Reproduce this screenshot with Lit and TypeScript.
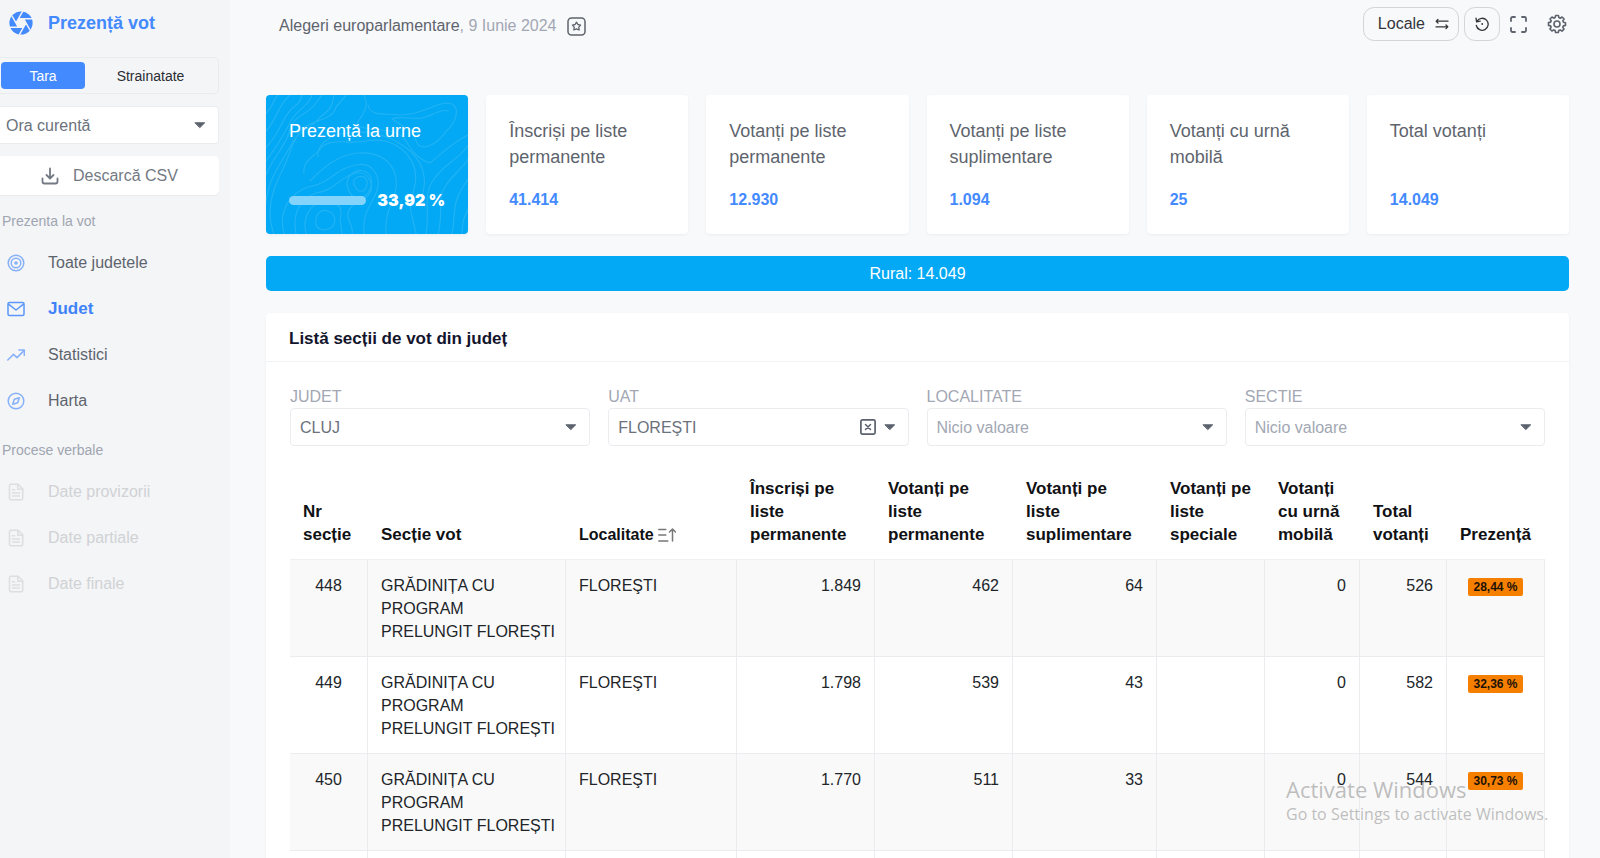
import { LitElement, html, svg, css, nothing, TemplateResult } from "lit";
import { customElement, property } from "lit/decorators.js";

const icons: Record<string, TemplateResult> = {
  target: svg`<circle cx="9" cy="9" r="7.8"/><circle cx="9" cy="9" r="4.8"/><circle cx="9" cy="9" r="1.8" fill="currentColor" stroke="none"/>`,
  mail: svg`<rect x="1" y="2.5" width="16" height="13" rx="1.5"/><path d="M1.5 4.2 9 10l7.500-5.800"/>`,
  trend: svg`<path d="M.8 14 6.500 8.400l3.500 3.200L17 4.600"/><path d="M12 4h5.300v5.300"/>`,
  compass: svg`<circle cx="9" cy="9" r="7.800"/><path d="M12.300 5.700 10.700 10.700 5.700 12.300 7.300 7.300z"/>`,
  file: svg`<path d="M4 1.200h7l4.700 4.600v9.500a1.500 1.500 0 0 1-1.500 1.500H4a1.500 1.500 0 0 1-1.500-1.500V2.700A1.500 1.500 0 0 1 4 1.200z"/><path d="M10.800 1.500v4.700h4.700M5.500 6.800h2M5.500 10h7M5.500 13h7"/>`,
};

interface NavItem {
  icon: string;
  label: string;
  active?: boolean;
}

const voteLinks: NavItem[] = [
  { icon: "target", label: "Toate judetele" },
  { icon: "mail", label: "Judet", active: true },
  { icon: "trend", label: "Statistici" },
  { icon: "compass", label: "Harta" },
];
const recordLinks: NavItem[] = [
  { icon: "file", label: "Date provizorii" },
  { icon: "file", label: "Date partiale" },
  { icon: "file", label: "Date finale" },
];

const stats = [
  ["Înscriși pe liste permanente", "41.414"],
  ["Votanți pe liste permanente", "12.930"],
  ["Votanți pe liste suplimentare", "1.094"],
  ["Votanți cu urnă mobilă", "25"],
  ["Total votanți", "14.049"],
];

const filters = [
  { id: "judet", label: "JUDET", value: "CLUJ" },
  { id: "uat", label: "UAT", value: "FLOREŞTI", clearable: true },
  { id: "localitate", label: "LOCALITATE", value: "" },
  { id: "sectie", label: "SECTIE", value: "" },
];

const school = "GRĂDINIȚA CU\nPROGRAM\nPRELUNGIT FLOREȘTI";
const rows = [
  ["448", school, "FLOREŞTI", "1.849", "462", "64", "", "0", "526", "28,44 %"],
  ["449", school, "FLOREŞTI", "1.798", "539", "43", "", "0", "582", "32,36 %"],
  ["450", school, "FLOREŞTI", "1.770", "511", "33", "", "0", "544", "30,73 %"],
  ["", "", "", "", "", "", "", "", "", ""],
];

const base = css`
  *,
  *::before,
  *::after {
    box-sizing: border-box;
  }
  button,
  select {
    font: inherit;
    color: inherit;
    margin: 0;
    cursor: pointer;
  }
  button {
    border: 0;
    background: none;
    padding: 0;
  }
  svg {
    display: block;
    flex: none;
    fill: none;
    stroke: currentColor;
    stroke-linecap: round;
    stroke-linejoin: round;
  }
`;

@customElement("pv-select")
export class PvSelect extends LitElement {
  @property() label = "";
  @property() value = "";
  @property({ type: Boolean }) clearable = false;
  @property({ type: Boolean, attribute: "hide-label" }) hideLabel = false;

  static styles = [
    base,
    css`
      :host {
        display: block;
        min-width: 0;
      }
      .label {
        display: block;
        line-height: 22px;
        color: #a2a7b3;
      }
      .box {
        display: grid;
        align-items: center;
        height: 38px;
      }
      .field {
        grid-area: 1 / 1;
        width: 100%;
        height: 100%;
        padding: 0 32px 0 9px;
        appearance: none;
        border: 1px solid #eaecf0;
        border-radius: 4px;
        background: #fff;
        color: #6b727c;
        outline-offset: -2px;
      }
      .field.empty {
        color: #a2a7b3;
      }
      .side {
        border-left: 0;
        border-radius: 0 4px 4px 0;
        padding-left: 6px;
      }
      .marks {
        grid-area: 1 / 1;
        justify-self: end;
        display: flex;
        align-items: center;
        gap: 8px;
        padding-right: 13px;
        pointer-events: none;
        color: #5b626d;
      }
      .clear {
        pointer-events: auto;
      }
    `,
  ];

  render() {
    return html`
      ${this.hideLabel ? nothing : html`<label class="label" for="field">${this.label}</label>`}
      <div class="box">
        <select
          id="field"
          aria-label=${this.label}
          class="field ${this.value ? "" : "empty"} ${this.hideLabel ? "side" : ""}"
        >
          <option>${this.value || "Nicio valoare"}</option>
        </select>
        <span class="marks">
          ${this.clearable
            ? html`<button class="clear" aria-label="Șterge">
                <svg width="16" height="16" viewBox="0 0 16 16" stroke-width="1.700">
                  <rect x=".9" y=".9" width="14.200" height="14.200" rx="1.500" />
                  <path d="m5.500 5.500 5 5M10.500 5.500l-5 5" stroke-width="1.500" />
                </svg>
              </button>`
            : nothing}
          <svg width="12" height="8" viewBox="0 0 12 8">
            <path d="M1.300 1.800h9.400L6 6.400z" fill="currentColor" />
          </svg>
        </span>
      </div>
    `;
  }
}

@customElement("pv-sidebar")
export class PvSidebar extends LitElement {
  static styles = [
    base,
    css`
      :host {
        display: block;
        background: #f4f5f7;
        overflow: hidden;
      }
      .brand {
        display: flex;
        align-items: center;
        gap: 15px;
        height: 46px;
        padding-left: 9px;
        margin-bottom: 11px;
        color: #448aff;
        font-size: 18px;
        font-weight: 700;
        text-decoration: none;
      }
      .tools {
        display: grid;
        gap: 12px;
        margin-right: 11px;
      }
      .tabs {
        display: grid;
        grid-template-columns: 84px 1fr;
        height: 37px;
        padding: 4px 2px 4px 1px;
        border: 1px solid #eaebee;
        border-left: 0;
        border-radius: 0 5px 5px 0;
        font-size: 14px;
        color: #2a2d33;
      }
      .tab {
        border-radius: 4px;
      }
      .tab.on {
        background: #448aff;
        color: #fff;
      }
      .download {
        display: flex;
        align-items: center;
        gap: 14px;
        height: 39px;
        padding-left: 41px;
        border-radius: 0 5px 5px 0;
        background: #fff;
        box-shadow: 0 1px 1px #e9ebee;
        color: #737a84;
      }
      .group {
        margin: 16px 0 9px;
        padding-left: 2px;
        font-size: 14px;
        font-weight: 400;
        line-height: 20px;
        color: #9fa5b1;
      }
      .list {
        list-style: none;
        margin: 0;
        padding: 0;
      }
      .link {
        display: flex;
        align-items: center;
        gap: 23px;
        height: 46px;
        padding-left: 7px;
        color: #5e646d;
        text-decoration: none;
      }
      .glyph {
        color: #86b0f8;
      }
      .link.active {
        color: #3f83f8;
        font-size: 17px;
        font-weight: 700;
      }
      .link.active .glyph {
        color: #5b97fa;
      }
      .link.off {
        color: #d0d2d5;
      }
      .link.off .glyph {
        color: #dcdee0;
      }
    `,
  ];

  private list(items: NavItem[], off = false) {
    return html`<ul class="list">
      ${items.map(
        (i) => html`<li>
          <a class="link ${i.active ? "active" : ""} ${off ? "off" : ""}" href="#">
            <svg class="glyph" width="18" height="18" viewBox="0 0 18 18" stroke-width="1.500">${icons[i.icon]}</svg>
            ${i.label}
          </a>
        </li>`
      )}
    </ul>`;
  }

  render() {
    return html`
      <a class="brand" href="#">
        <svg width="24" height="24" viewBox="0 0 24 24">
          <circle cx="12" cy="12" r="11.600" fill="#448aff" stroke="none" />
          <path d="M17 12 14.500 16.300H9.500L7 12 9.500 7.700H14.500z" fill="#f4f5f7" stroke="none" />
          <path
            d="M17 12 10.500 23.300M14.500 16.300H1.500M9.500 16.300 3 5M7 12 13.500.7M9.500 7.700H22.500M14.500 7.700 21 19"
            stroke="#f4f5f7"
            stroke-width="1.500"
          />
        </svg>
        Prezență vot
      </a>
      <div class="tools">
        <div class="tabs">
          <button class="tab on" aria-pressed="true">Tara</button>
          <button class="tab" aria-pressed="false">Strainatate</button>
        </div>
        <pv-select label="Ora" value="Ora curentă" hide-label></pv-select>
        <button class="download">
          <svg width="18" height="18" viewBox="0 0 18 18" stroke-width="1.800">
            <path d="M9 1.500v9.500M5.500 8 9 11.500 12.500 8M1.500 11.500v3a2 2 0 0 0 2 2h11a2 2 0 0 0 2-2v-3" />
          </svg>
          Descarcă CSV
        </button>
      </div>
      <nav>
        <h2 class="group">Prezenta la vot</h2>
        ${this.list(voteLinks)}
        <h2 class="group">Procese verbale</h2>
        ${this.list(recordLinks, true)}
      </nav>
    `;
  }
}

@customElement("pv-table")
export class PvTable extends LitElement {
  static styles = [
    base,
    css`
      :host {
        display: block;
      }
      .table {
        width: 100%;
        table-layout: fixed;
        border-collapse: separate;
        border-spacing: 0;
        line-height: 23px;
        color: #212529;
      }
      .c0 { width: 78px; }
      .c1 { width: 198px; }
      .c2 { width: 171px; }
      .c3 { width: 138px; }
      .c4 { width: 138px; }
      .c5 { width: 144px; }
      .c6 { width: 108px; }
      .c7 { width: 95px; }
      .c8 { width: 87px; }
      .c9 { width: 98px; }
      .head {
        padding: 13px 13px;
        border-bottom: 1px solid #eff0f2;
        font-size: 17px;
        text-align: left;
        vertical-align: bottom;
        color: #101114;
      }
      .sort {
        display: flex;
        align-items: center;
        gap: 4px;
        font-size: 16px;
        font-weight: 700;
      }
      .arrow {
        color: #777;
      }
      .cell {
        height: 97px;
        padding: 14px 13px;
        border-right: 1px solid #eaecf0;
        border-bottom: 1px solid #eaecf0;
        vertical-align: top;
        text-align: right;
      }
      .row:nth-child(odd) .cell {
        background: #f9f9f9;
      }
      .cell.mid {
        text-align: center;
      }
      .cell.text {
        padding-bottom: 13px;
        text-align: left;
        white-space: pre;
      }
      .cell:not(.text) {
        padding-bottom: 13px;
      }
      .badge {
        display: inline-block;
        padding: 0 5px;
        border-radius: 2px;
        background: #f77f00;
        color: #1c1204;
        font-size: 12px;
        font-weight: 700;
        line-height: 18px;
        white-space: nowrap;
      }
    `,
  ];

  private heads = [
    "Nr secție",
    "Secție vot",
    "Localitate",
    "Înscriși pe liste permanente",
    "Votanți pe liste permanente",
    "Votanți pe liste suplimentare",
    "Votanți pe liste speciale",
    "Votanți cu urnă mobilă",
    "Total votanți",
    "Prezență",
  ];

  private kind(i: number) {
    return i === 0 || i === 9 ? "mid" : i < 3 ? "text" : "";
  }

  render() {
    return html`<table class="table">
      <thead>
        <tr>
          ${this.heads.map(
            (h, i) => html`<th class="head c${i}" scope="col">
              ${i === 2
                ? html`<button class="sort">
                    ${h}
                    <svg class="arrow" width="18" height="16" viewBox="0 0 18 16" stroke-width="1.500">
                      <path d="M.8 2.500h7M.8 8h7M.8 14h9M14.500 14V2.500M11.500 5l3-3 3 3" />
                    </svg>
                  </button>`
                : h}
            </th>`
          )}
        </tr>
      </thead>
      <tbody>
        ${rows.map(
          (r) => html`<tr class="row">
            ${r.map(
              (v, i) => html`<td class="cell ${this.kind(i)}">${i === 9 && v ? html`<span class="badge">${v}</span>` : v}</td>`
            )}
          </tr>`
        )}
      </tbody>
    </table>`;
  }
}

@customElement("app-root")
export class AppRoot extends LitElement {
  static styles = [
    base,
    css`
      :host {
        display: grid;
        grid-template-columns: 230px minmax(0, 1fr);
        position: relative;
        height: 100vh;
        overflow: hidden;
        background: #f8f9fb;
        font-family: "Liberation Sans", Arial, sans-serif;
        font-size: 16px;
        color: #5e646d;
      }
      .main {
        overflow-y: auto;
        scrollbar-width: none;
        padding: 0 32px 32px 36px;
      }
      .top {
        display: flex;
        align-items: center;
        height: 52px;
        margin: 0 1px 43px 13px;
      }
      .event {
        display: flex;
        align-items: center;
        flex: 1;
        margin: 0;
        font-size: 16px;
        font-weight: 400;
      }
      .date {
        color: #a2a7b3;
        margin-right: 10px;
      }
      .actions {
        display: flex;
        align-items: center;
        margin-top: -4px;
      }
      .pill {
        display: flex;
        align-items: center;
        justify-content: center;
        gap: 10px;
        height: 34px;
        min-width: 36px;
        border: 1px solid #d3d5d8;
        border-radius: 11px;
        margin-right: 5px;
        color: #33363b;
      }
      .pill.wide {
        padding: 0 9px 0 14px;
      }
      .plain {
        margin-left: 5px;
      }
      .plain + .plain {
        margin-left: 20px;
      }
      .stack {
        display: grid;
        gap: 22px;
      }
      .cards {
        display: grid;
        grid-template-columns: repeat(6, minmax(0, 1fr));
        gap: 18px;
      }
      .card {
        display: flex;
        flex-direction: column;
        justify-content: space-between;
        min-height: 139px;
        padding: 23px 23px 22px;
        border-radius: 4px;
        background: #fff;
        box-shadow: 0 1px 3px rgba(40, 50, 80, 0.06);
      }
      .name {
        margin: 0;
        font-size: 18px;
        font-weight: 400;
        line-height: 26px;
      }
      .number {
        font-weight: 700;
        line-height: 24px;
        color: #448aff;
      }
      .hero {
        position: relative;
        overflow: hidden;
        background: #03a9f4;
        color: #fff;
      }
      .relief {
        position: absolute;
        inset: 0;
        width: 100%;
        height: 100%;
        stroke: rgba(255, 255, 255, 0.12);
        stroke-width: 1.200;
      }
      .hero .name,
      .turnout {
        position: relative;
      }
      .turnout {
        display: flex;
        align-items: center;
        gap: 11px;
        line-height: 24px;
      }
      .bar {
        flex: 1;
        height: 9px;
        border-radius: 5px;
        background: #84d3fa;
      }
      .percent {
        font-family: Inter, "Liberation Sans", sans-serif;
        font-weight: 900;
      }
      .split {
        height: 35px;
        border-radius: 5px;
        background: #03a9f4;
        color: #fff;
        line-height: 35px;
        text-align: center;
      }
      .panel {
        border-radius: 4px;
        background: #fff;
        box-shadow: 0 1px 3px rgba(40, 50, 80, 0.06);
      }
      .title {
        margin: 0;
        padding: 3px 23px 0;
        border-bottom: 1px solid #f1f2f5;
        font-size: 17px;
        line-height: 45px;
        color: #12152c;
      }
      .body {
        padding: 24px 24px;
      }
      .filters {
        display: grid;
        grid-template-columns: repeat(4, minmax(0, 1fr));
        gap: 18px;
        margin-bottom: 18px;
      }
      .notice {
        position: absolute;
        right: 46px;
        bottom: 32px;
        min-width: 268px;
        font-family: "Open Sans", sans-serif;
        font-size: 16px;
        line-height: 24px;
        color: rgba(130, 130, 130, 0.5);
        pointer-events: none;
      }
      .lead {
        font-size: 22px;
        line-height: 26px;
      }
    `,
  ];

  render() {
    return html`
      <pv-sidebar></pv-sidebar>
      <main class="main">
        <header class="top">
          <h1 class="event">
            Alegeri europarlamentare<span class="date">, 9 Iunie 2024</span>
            <button aria-label="Favorite">
              <svg width="19" height="19" viewBox="0 0 19 19" stroke-width="1.500">
                <rect x="1" y="1" width="17" height="17" rx="3.500" />
                <path d="m9.500 5.200 1.400 2.300 2.700.6-1.800 2 .3 2.900-2.600-1.100L6.900 13l.3-2.900-1.800-2 2.700-.6z" stroke-width="1.300" />
              </svg>
            </button>
          </h1>
          <div class="actions">
            <button class="pill wide">
              Locale
              <svg width="14" height="14" viewBox="0 0 14 14" stroke-width="1.300">
                <path d="M13 4.200H1.200M3 2.400 1.200 4.200 3 6M1 9.800h11.800M11 8l1.800 1.800L11 11.600" />
              </svg>
            </button>
            <button class="pill" aria-label="Istoric">
              <svg width="14" height="14" viewBox="0 0 14 14" stroke-width="1.300">
                <path d="M2 4.200A6 6 0 1 1 1.300 8.500M1 1.200l.6 3.600 3.600-.6" />
                <circle cx="7.200" cy="7" r=".9" fill="currentColor" stroke="none" />
              </svg>
            </button>
            <button class="plain" aria-label="Ecran complet">
              <svg width="17" height="17" viewBox="0 0 17 17" stroke-width="1.800">
                <path d="M1 5V2.500A1.500 1.500 0 0 1 2.500 1H5M12 1h2.500A1.500 1.500 0 0 1 16 2.500V5M16 12v2.500a1.500 1.500 0 0 1-1.500 1.500H12M5 16H2.500A1.500 1.500 0 0 1 1 14.500V12" />
              </svg>
            </button>
            <button class="plain" aria-label="Setări">
              <svg width="20" height="20" viewBox="0 0 20 20" stroke-width="1.600">
                <path
                  d="M8.600 1.500h2.800l.5 2.100 1.300.6 1.900-1.200 2 2-1.200 1.800.5 1.400 2.100.5v2.700l-2.100.5-.6 1.300 1.200 1.900-2 2-1.800-1.200-1.400.6-.5 2H8.600l-.5-2-1.300-.6L4.900 17l-2-2 1.200-1.800-.5-1.300-2.100-.5V8.600l2.100-.5.6-1.300L3 5l2-2 1.800 1.200 1.300-.6z"
                />
                <circle cx="10" cy="10" r="3" />
              </svg>
            </button>
          </div>
        </header>
        <div class="stack">
          <section class="cards">
            <article class="card hero">
              <svg class="relief" viewBox="0 0 202 139" preserveAspectRatio="none">
                <path
                  d="M0 18C8 12 6 5 12 0M0 36C10 26 12 10 24 0M0 52C14 40 16 20 30 10 36 6 34 3 36 0M0 66C12 50 20 36 26 24 34 12 42 12 46 0M0 80C8 60 20 52 24 34 28 20 44 18 50 8L56 0M0 108C2 84 14 70 24 52 30 36 46 34 54 22 62 16 66 14 68 0M8 139C0 118 6 96 14 80 24 62 26 44 36 34 48 24 66 26 70 12L80 0M38 78C36 66 48 62 56 52 66 42 84 50 100 46 124 42 142 54 148 72 154 92 140 104 146 122L150 139M52 62C50 50 64 40 80 38 104 34 128 42 144 56 162 72 160 92 154 106M18 139C12 116 24 98 42 92 62 90 72 72 90 70 108 66 116 84 110 98 104 112 96 118 98 139M44 86C56 74 70 60 92 58 116 56 132 70 130 92 128 108 118 116 120 139M30 139C26 118 34 104 50 98 68 96 76 80 90 78 102 76 108 88 104 98 98 108 84 106 82 118 80 126 88 130 86 139M40 139C36 122 44 110 56 106 70 104 78 112 74 124L76 139M50 130C48 118 56 114 62 116 72 120 70 132 62 134 56 136 52 134 50 130M88 90C86 84 92 80 98 82 104 86 100 98 94 96 90 96 90 92 88 90M82 94C78 82 88 74 98 76 110 80 106 100 96 102 88 104 84 100 82 94M102 10C104 22 120 18 134 20 156 20 168 8 182 8 196 10 190 28 180 36 174 46 160 56 152 50 146 40 150 34 138 32L126 24C136 20 150 26 160 22 170 18 176 14 182 16M98 0C104 12 96 20 90 30 104 38 130 30 140 46 146 58 156 66 164 68 176 58 188 46 202 40M160 139C164 112 156 100 168 84 178 68 192 66 202 50M172 139C178 116 170 104 180 90 188 78 198 72 202 64M186 139C190 118 184 108 202 84M196 139C196 126 198 122 202 114"
                />
              </svg>
              <h2 class="name">Prezență la urne</h2>
              <div class="turnout">
                <div class="bar" role="progressbar" aria-label="Prezență la urne" aria-valuenow="33.92"></div>
                <span class="percent">33,92 %</span>
              </div>
            </article>
            ${stats.map(
              ([name, value]) => html`<article class="card">
                <h2 class="name">${name}</h2>
                <span class="number">${value}</span>
              </article>`
            )}
          </section>
          <div class="split">Rural: 14.049</div>
          <section class="panel">
            <h2 class="title">Listă secții de vot din județ</h2>
            <div class="body">
              <div class="filters">
                ${filters.map(
                  (f) => html`<pv-select
                    id=${f.id}
                    label=${f.label}
                    value=${f.value}
                    ?clearable=${f.clearable}
                  ></pv-select>`
                )}
              </div>
              <pv-table></pv-table>
            </div>
          </section>
        </div>
      </main>
      <aside class="notice">
        <div class="lead">Activate Windows</div>
        <div>Go to Settings to activate Windows.</div>
      </aside>
    `;
  }
}
